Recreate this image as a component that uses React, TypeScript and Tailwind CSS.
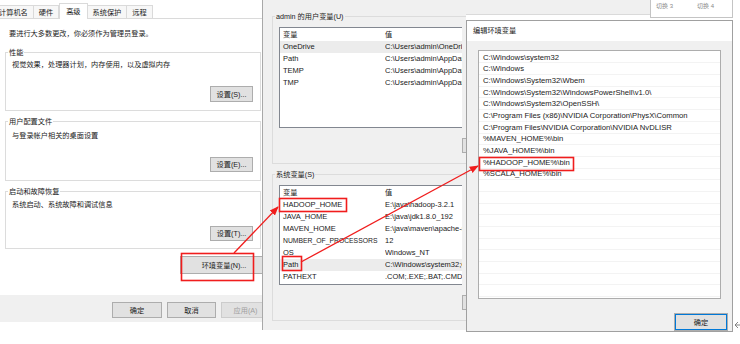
import type { ReactNode } from 'react';

const userVars = [
  ['OneDrive', 'C:\\Users\\admin\\OneDrive'],
  ['Path', 'C:\\Users\\admin\\AppData\\Local\\Microsoft\\WindowsApps;'],
  ['TEMP', 'C:\\Users\\admin\\AppData\\Local\\Temp'],
  ['TMP', 'C:\\Users\\admin\\AppData\\Local\\Temp'],
];

const sysVars = [
  ['HADOOP_HOME', 'E:\\java\\hadoop-3.2.1'],
  ['JAVA_HOME', 'E:\\java\\jdk1.8.0_192'],
  ['MAVEN_HOME', 'E:\\java\\maven\\apache-maven-3.6.3'],
  ['NUMBER_OF_PROCESSORS', '12'],
  ['OS', 'Windows_NT'],
  ['Path', 'C:\\Windows\\system32;C:\\Windows;'],
  ['PATHEXT', '.COM;.EXE;.BAT;.CMD;.VBS;.VBE;'],
  ['PROCESSOR_ARCHITECTURE', 'AMD64'],
];

const pathItems = [
  'C:\\Windows\\system32',
  'C:\\Windows',
  'C:\\Windows\\System32\\Wbem',
  'C:\\Windows\\System32\\WindowsPowerShell\\v1.0\\',
  'C:\\Windows\\System32\\OpenSSH\\',
  'C:\\Program Files (x86)\\NVIDIA Corporation\\PhysX\\Common',
  'C:\\Program Files\\NVIDIA Corporation\\NVIDIA NvDLISR',
  '%MAVEN_HOME%\\bin',
  '%JAVA_HOME%\\bin',
  '%HADOOP_HOME%\\bin',
  '%SCALA_HOME%\\bin',
  '', '', '', '', '', '', '', '', '', '', '',
];

function Btn({ children, className = '' }: { children?: ReactNode; className?: string }) {
  return (
    <div className={`flex items-center justify-center bg-[#e1e1e1] border border-[#adadad] text-[7.2px] leading-[9px] text-[#1a1a1a] ${className}`}>
      {children}
    </div>
  );
}

function Group({ label, className = '', children }: { label: string; className?: string; children: ReactNode }) {
  return (
    <fieldset className={`border border-[#dcdcdc] ${className}`}>
      <legend className="ml-[-4px] px-[1px] text-[7.2px] leading-[9px] text-[#1a1a1a]">{label}</legend>
      {children}
    </fieldset>
  );
}

function VarList({ rows, selected, className = '' }: { rows: string[][]; selected: number; className?: string }) {
  return (
    <div className={`w-[183px] bg-white border border-r-0 border-[#828790] overflow-hidden ${className}`}>
      <div className="flex h-[12.5px] items-center text-[7.2px] leading-[9px] text-[#1a1a1a]">
        <div className="w-[105px] pl-[3px]">变量</div>
        <div>值</div>
      </div>
      {rows.map(([k, v], i) => (
        <div
          key={k}
          className={`flex h-[12px] items-center text-[7.5px] leading-[10px] text-[#1a1a1a] whitespace-nowrap ${i === selected ? 'bg-[#ececec]' : ''}`}
        >
          <div className={`w-[105px] shrink-0 pl-[3px] ${k.length > 15 ? 'text-[6.8px]' : ''}`}>{k}</div>
          <div className="w-[77px] overflow-hidden">{v}</div>
        </div>
      ))}
    </div>
  );
}

export default function App() {
  return (
    <div className="relative w-[740px] h-[344px] bg-white overflow-hidden font-[family-name:'Liberation_Sans','Noto_Sans_CJK_SC',sans-serif]">
      {/* system properties */}
      <div className="absolute left-0 top-0 w-[270px] h-[322px] flex flex-col bg-white">
        <div className="flex items-end h-[18px] ml-[-7px] text-[7.2px] leading-[9px] text-[#1a1a1a]">
          <div className="h-[13px] px-[5px] flex items-center border border-b-0 border-[#dadada] bg-[#f7f7f7]">计算机名</div>
          <div className="h-[13px] px-[5px] flex items-center border border-b-0 border-l-0 border-[#dadada] bg-[#f7f7f7]">硬件</div>
          <div className="relative z-10 h-[16px] mb-[-1px] px-[6px] flex items-center border border-b-0 border-[#dadada] bg-white">高级</div>
          <div className="h-[13px] px-[5px] flex items-center border border-b-0 border-l-0 border-[#dadada] bg-[#f7f7f7]">系统保护</div>
          <div className="h-[13px] px-[5px] flex items-center border border-b-0 border-l-0 border-[#dadada] bg-[#f7f7f7]">远程</div>
        </div>
        <div className="flex-1 flex flex-col border-t border-[#dadada] pl-[5px] pr-[9px]">
          <div className="pt-[10px] pl-[4px] leading-[10px] text-[7.2px] text-[#1a1a1a]">要进行大多数更改，你必须作为管理员登录。</div>
          <Group label="性能" className="mt-[9px] flex flex-col pl-[6px] pr-[7px] pb-[8px]">
            <div className="pt-[3px] leading-[10px] text-[7.2px] text-[#1a1a1a]">视觉效果，处理器计划，内存使用，以及虚拟内存</div>
            <Btn className="self-end mt-[16px] w-[43px] h-[16px]">设置(S)...</Btn>
          </Group>
          <Group label="用户配置文件" className="mt-[6px] flex flex-col pl-[6px] pr-[7px] pb-[8px]">
            <div className="pt-[5px] leading-[10px] text-[7.2px] text-[#1a1a1a]">与登录帐户相关的桌面设置</div>
            <Btn className="self-end mt-[16px] w-[43px] h-[15px]">设置(E)...</Btn>
          </Group>
          <Group label="启动和故障恢复" className="mt-[6px] flex flex-col pl-[6px] pr-[7px] pb-[7px]">
            <div className="pt-[4px] leading-[10px] text-[7.2px] text-[#1a1a1a]">系统启动、系统故障和调试信息</div>
            <Btn className="self-end mt-[16px] w-[43px] h-[15px]">设置(T)...</Btn>
          </Group>
          <Btn className="self-end mt-[7px] mr-[-7px] w-[88px] h-[18px]">环境变量(N)...</Btn>
        </div>
        <div className="h-[27px] bg-[#f0f0f0] flex gap-[5px] pl-[112px] pt-[7px]">
          <Btn className="w-[55px] h-[16px]">确定</Btn>
          <Btn className="w-[54px] h-[16px]">取消</Btn>
          <Btn className="w-[54px] h-[16px] text-[#a0a0a0] border-[#cccccc]">应用(A)</Btn>
        </div>
      </div>

      {/* environment variables */}
      <div className="absolute left-[262px] top-0 w-[204px] h-[330px] bg-[#f0f0f0] border-l border-[#a8a8a8] overflow-hidden">
        <div className="w-[380px] pl-[9px] pt-[12px] flex flex-col">
          <Group label="admin 的用户变量(U)" className="flex flex-col px-[6px] pb-[10px]">
            <VarList rows={userVars} selected={0} className="mt-[6px] h-[101px]" />
            <div className="flex mt-[10px] ml-[183px]">
              <Btn className="w-[60px] h-[15px]" />
            </div>
          </Group>
          <Group label="系统变量(S)" className="mt-[6px] flex flex-col px-[6px] pb-[10px]">
            <VarList rows={sysVars} selected={5} className="mt-[6px] h-[100px]" />
            <div className="flex mt-[10px] ml-[183px]">
              <Btn className="w-[60px] h-[15px]" />
            </div>
          </Group>
        </div>
      </div>

      {/* strips of windows behind */}
      <div className="absolute left-[466px] top-0 w-[184px] h-[15px] bg-[#f0f0f0] border-b border-[#dadada]" />
      <div className="absolute left-[650px] top-0 w-[83px] h-[18px] bg-white border-l border-r border-b border-[#c4c4c4] flex items-start gap-[24px] pl-[5px] pt-[2px] text-[6px] leading-[8px] text-[#8a8a8a]">
        <span>切换 3</span>
        <span>切换 4</span>
      </div>

      {/* edit environment variable */}
      <div className="absolute left-[466px] top-[20px] w-[267px] h-[312px] bg-[#f0f0f0] border border-[#a0a0a0] overflow-hidden flex flex-col">
        <div className="h-[20px] bg-white flex items-center pl-[6px] text-[7.2px] leading-[9px] text-[#1a1a1a]">编辑环境变量</div>
        <div className="mt-[9px] mx-[11px] h-[253px] pt-[1px] bg-white border border-[#adadad] overflow-hidden">
          {pathItems.map((p, i) => (
            <div key={i} className="h-[11.7px] flex items-center pl-[4px] border-b border-[#f3f3f3] text-[7.7px] leading-[9px] text-[#1a1a1a] whitespace-nowrap">
              {p}
            </div>
          ))}
        </div>
        <Btn className="self-end mt-[14px] mr-[4px] w-[54px] h-[18px] border-[#0078d7] shadow-[inset_0_0_0_1px_#0078d7]">确定</Btn>
      </div>

      {/* annotations */}
      <svg className="absolute left-0 top-0 w-[740px] h-[344px] pointer-events-none" viewBox="0 0 740 344">
        <defs>
          <marker id="ah" viewBox="0 0 10 10" refX="9" refY="5" markerWidth="7" markerHeight="7" orient="auto-start-reverse">
            <path d="M0 1 L10 5 L0 9 z" fill="#f01d1d" />
          </marker>
        </defs>
        <rect x="181.5" y="253.5" width="72" height="27" fill="none" stroke="#f01d1d" strokeWidth="1.6" />
        <rect x="279.5" y="198.5" width="67" height="13" fill="none" stroke="#f01d1d" strokeWidth="1.6" />
        <rect x="282.5" y="256.5" width="19" height="14" fill="none" stroke="#f01d1d" strokeWidth="1.6" />
        <rect x="479.5" y="157.5" width="94" height="13" fill="none" stroke="#f01d1d" strokeWidth="1.6" />
        <line x1="234" y1="253" x2="278" y2="207" stroke="#f01d1d" strokeWidth="1.3" markerEnd="url(#ah)" />
        <line x1="301" y1="262" x2="478" y2="166" stroke="#f01d1d" strokeWidth="1.3" markerEnd="url(#ah)" />
        <path d="M740 325 H735 M738 322 L735 325 L738 328" fill="none" stroke="#777" strokeWidth="0.9" />
      </svg>
    </div>
  );
}
